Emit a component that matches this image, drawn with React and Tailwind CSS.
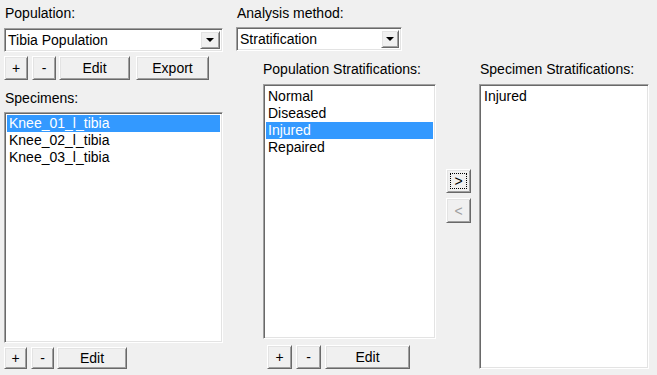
import React from "react";

function Btn({ w, h = 24, children, className = "", focus = false, disabled = false }) {
  return (
    <div
      className={`relative flex items-center justify-center bg-[#f0f0f0] border border-t-white border-l-white border-b-[#696969] border-r-[#696969] shadow-[inset_1px_1px_0_#e3e3e3,inset_-1px_-1px_0_#a0a0a0] ${disabled ? "text-[#a0a0a0]" : "text-black"} ${className}`}
      style={{ width: w, height: h }}
    >
      {focus && (
        <div className="absolute left-[3px] top-[3px] right-[3px] bottom-[3px] border border-dotted border-black" />
      )}
      <span className="relative">{children}</span>
    </div>
  );
}

function Sunken({ className = "", children }) {
  return (
    <div
      className={`bg-white border border-t-[#a0a0a0] border-l-[#a0a0a0] border-b-white border-r-white shadow-[inset_1px_1px_0_#696969,inset_-1px_-1px_0_#e3e3e3] ${className}`}
    >
      {children}
    </div>
  );
}

function Combo({ w, text, btnW }) {
  return (
    <Sunken className="h-[24px] flex items-stretch p-[2px]">
      <div className="flex items-center flex-1 pl-[1px]" style={{ width: w - btnW - 6 }}>
        <span>{text}</span>
      </div>
      <div
        className="flex items-center justify-center bg-[#f0f0f0] border border-t-white border-l-white border-b-[#696969] border-r-[#696969] shadow-[inset_1px_1px_0_#e3e3e3,inset_-1px_-1px_0_#a0a0a0]"
        style={{ width: btnW }}
      >
        <div className="w-0 h-0 border-l-[4px] border-r-[4px] border-t-[4px] border-l-transparent border-r-transparent border-t-black" />
      </div>
    </Sunken>
  );
}

function ListItem({ children, selected }) {
  return (
    <div className={`h-[17px] leading-[17px] pl-[2px] ${selected ? "bg-[#3399ff] text-white" : "text-black"}`}>
      {children}
    </div>
  );
}

export default function App() {
  return (
    <div className="w-[657px] h-[375px] bg-[#f0f0f0] flex font-['Liberation_Sans',Arial,sans-serif] text-[14px] leading-[16px] text-black overflow-hidden">
      {/* Left column */}
      <div className="ml-[4px] w-[219px] flex flex-col shrink-0">
        <div className="mt-[5px] ml-[1px] h-[16px]">Population:</div>
        <div className="mt-[7px] w-[219px]">
          <Combo w={219} text="Tibia Population" btnW={20} />
        </div>
        <div className="mt-[4px] flex">
          <Btn w={24} h={24}>+</Btn>
          <Btn w={24} h={24} className="ml-[4px]">-</Btn>
          <Btn w={71} h={24} className="ml-[3px]">Edit</Btn>
          <Btn w={73} h={24} className="ml-[6px]">Export</Btn>
        </div>
        <div className="mt-[10px] ml-[1px] h-[16px]">Specimens:</div>
        <Sunken className="mt-[6px] h-[231px] p-[2px] pt-[2px]">
          <ListItem selected>Knee_01_l_tibia</ListItem>
          <ListItem>Knee_02_l_tibia</ListItem>
          <ListItem>Knee_03_l_tibia</ListItem>
        </Sunken>
        <div className="mt-[4px] flex">
          <Btn w={23} h={22}>+</Btn>
          <Btn w={23} h={22} className="ml-[4px]">-</Btn>
          <Btn w={70} h={22} className="ml-[3px]">Edit</Btn>
        </div>
      </div>

      {/* Middle column */}
      <div className="ml-[13px] w-[200px] flex flex-col shrink-0">
        <div className="mt-[5px] ml-[1px] h-[16px]">Analysis method:</div>
        <div className="mt-[6px] w-[166px]">
          <Combo w={166} text="Stratification" btnW={18} />
        </div>
        <div className="mt-[10px] ml-[27px] h-[16px]">Population Stratifications:</div>
        <Sunken className="mt-[7px] ml-[27px] w-[173px] h-[255px] p-[2px] pt-[3px]">
          <ListItem>Normal</ListItem>
          <ListItem>Diseased</ListItem>
          <ListItem selected>Injured</ListItem>
          <ListItem>Repaired</ListItem>
        </Sunken>
        <div className="mt-[6px] ml-[31px] flex">
          <Btn w={25} h={24}>+</Btn>
          <Btn w={25} h={24} className="ml-[4px]">-</Btn>
          <Btn w={85} h={24} className="ml-[4px]">Edit</Btn>
        </div>
      </div>

      {/* Arrow column */}
      <div className="ml-[10px] w-[25px] flex flex-col shrink-0 pt-[169px]">
        <Btn w={25} h={24} focus>&gt;</Btn>
        <Btn w={25} h={25} className="mt-[5px]" disabled>&lt;</Btn>
      </div>

      {/* Right column */}
      <div className="ml-[8px] w-[170px] flex flex-col shrink-0">
        <div className="mt-[61px] ml-[1px] h-[16px]">Specimen Stratifications:</div>
        <Sunken className="mt-[7px] h-[285px] p-[2px] pt-[3px]">
          <ListItem>Injured</ListItem>
        </Sunken>
      </div>
    </div>
  );
}
